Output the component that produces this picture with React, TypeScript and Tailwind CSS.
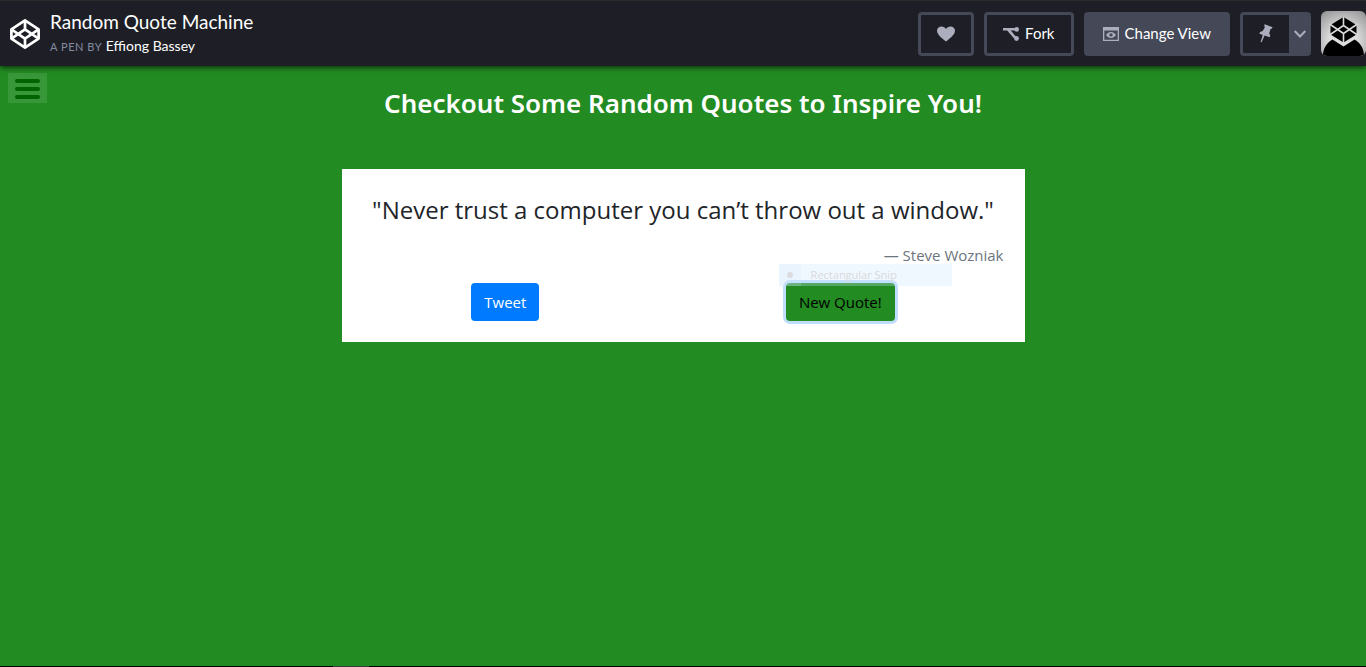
import React from "react";

function CodePenLogo() {
  return (
    <svg viewBox="0 0 30 30" className="h-[30px] w-[30px]" fill="none" stroke="#fff" strokeWidth="2.7" strokeLinejoin="round" aria-hidden="true">
      <path d="M15 1.4 28.6 10.4V19.6L15 28.6 1.4 19.6V10.4Z" />
      <path d="M15 1.4V10.4M15 19.6V28.6M1.4 10.4 15 19.6 28.6 10.4M1.4 19.6 15 10.4 28.6 19.6" />
    </svg>
  );
}

function HeartIcon() {
  return (
    <svg viewBox="0 0 18 16" className="h-4 w-[18px]" fill="#adaebd" aria-hidden="true">
      <path d="M9 15.600C5.800 12.800 0 9 0 4.800 0 2 2 .4 4.500 .4 6.500 .4 8.200 1.400 9 3 9.800 1.400 11.500 .4 13.500 .4 16 .4 18 2 18 4.800 18 9 12.200 12.800 9 15.600Z" />
    </svg>
  );
}

function ForkIcon() {
  return (
    <svg viewBox="0 0 16 14" className="h-[14px] w-4" fill="#adaebd" aria-hidden="true">
      <path d="M0 1H13V3.600H7.800L13 9.800 11.400 11.800 5.400 4.900C4.700 4.100 4 3.600 3 3.600H0Z" />
      <circle cx="13.7" cy="2.400" r="2.300" />
      <circle cx="13.5" cy="11.500" r="2.400" />
    </svg>
  );
}

function ViewIcon() {
  return (
    <svg viewBox="0 0 16 14" className="h-[14px] w-4" aria-hidden="true">
      <path fill="#adaebd" fillRule="evenodd" d="M0 0H16V14H0ZM1.300 3.500V12.700H14.700V3.500Z" />
      <path fill="#adaebd" fillRule="evenodd" d="M3 7.900C4.500 5.800 6 4.900 8 4.900S11.500 5.800 13 7.900C11.500 10 10 10.900 8 10.900S4.500 10 3 7.900ZM8 6.200A1.700 1.700 0 1 0 8 9.600 1.700 1.700 0 1 0 8 6.200Z" />
    </svg>
  );
}

function PinIcon() {
  return (
    <svg viewBox="0 0 14 19" className="h-[19px] w-[14px]" fill="#adaebd" aria-hidden="true">
      <path d="M5.600 .3 13.600 3.200 12.600 4.800 11.500 5 10.200 9.400 11.300 11.600 10.700 13.300 5.600 11.500 2.600 18.300 1.600 18 3.800 10.900 .4 9.700 1 8 3.700 6.900 6 2.900 5.200 1.900Z" />
    </svg>
  );
}

function Avatar() {
  return (
    <svg viewBox="0 0 45 45" className="block h-[45px] w-[45px] rounded-md" role="img" aria-label="Profile">
      <defs>
        <radialGradient id="avatarGlow" cx="0.5" cy="0.65" r="0.75">
          <stop offset="0.4" stopColor="#dedede" />
          <stop offset="1" stopColor="#989898" />
        </radialGradient>
      </defs>
      <rect width="45" height="45" fill="url(#avatarGlow)" />
      <path d="M2 45C2 37 6 31.500 11.500 28.500L22.500 35.500 33.500 28.500C39 31.500 43 37 43 45Z" fill="#000" />
      <path d="M22.500 6 35.500 14V23.500L22.500 31.500 9.500 23.500V14Z" fill="#000" />
      <path d="M22.500 6V14.500M22.500 22.500V32M8.500 13 22.500 22.500 36.500 13M8.500 24 22.500 14.500 36.500 24" fill="none" stroke="#dadada" strokeWidth="1.6" />
    </svg>
  );
}

function Header() {
  return (
    <header className="relative flex h-[66px] items-center justify-between border-t border-[#2b2b2b] bg-[#1e1f26] pl-[10px] font-[Lato,sans-serif] text-white shadow-[0_1px_6px_rgba(0,0,0,0.8)]">
      <div className="flex items-center gap-[10px]">
        <a href="#home" aria-label="CodePen"><CodePenLogo /></a>
        <div className="pt-0.5">
          <h1 className="text-[19px] leading-6">Random Quote Machine</h1>
          <p className="text-[14px] leading-6">
            <span className="text-[11px] tracking-wider text-[#868ca0]">A PEN BY</span>{" "}
            <a href="#author">Effiong Bassey</a>
          </p>
        </div>
      </div>
      <div className="flex items-center gap-[10px] text-[15px]">
        <button aria-label="Love" className="flex h-11 w-14 items-center justify-center rounded border-[3px] border-[#444857]"><HeartIcon /></button>
        <button className="flex h-11 items-center gap-1.5 rounded border-[3px] border-[#444857] px-4"><ForkIcon />Fork</button>
        <button className="flex h-11 items-center gap-1.5 rounded bg-[#444857] px-[19px]"><ViewIcon />Change View</button>
        <div className="flex h-11 w-[71px] overflow-hidden rounded border-[3px] border-r-0 border-[#444857]">
          <button aria-label="Pin" className="flex flex-1 items-center justify-center"><PinIcon /></button>
          <button aria-label="More pin options" className="flex w-[22px] items-center justify-center bg-[#444857]">
            <svg viewBox="0 0 12 8" className="h-2 w-3" fill="none" stroke="#adaebd" strokeWidth="2" aria-hidden="true"><path d="M.7 1 6 6.500 11.300 1" /></svg>
          </button>
        </div>
        <Avatar />
      </div>
    </header>
  );
}

function QuoteCard() {
  return (
    <section className="mx-auto mt-12 w-1/2 bg-white pt-5 pb-[21px]">
      <blockquote>
        <p className="text-center text-[24px] leading-[42px] text-[#212529]">"Never trust a computer you can’t throw out a window."</p>
        <footer className="mt-3 pr-[21px] text-right text-[15px] leading-6 text-[#6c757d]">— Steve Wozniak</footer>
      </blockquote>
      <div className="relative mt-4 flex justify-between px-[19%]">
        <a href="#tweet" className="rounded bg-[#007bff] px-[13px] py-[7px] text-[15px] leading-6 text-white">Tweet</a>
        <button className="rounded bg-[#228b22] px-[13px] py-[7px] text-[15px] leading-6 text-black ring-[3px] ring-[#bfdeff]">New Quote!</button>
        <div className="pointer-events-none absolute -top-[19px] left-[64%] flex h-[22px] w-[173px] items-center bg-[#cce8ff]/30 text-[11px] text-[#d9d9dc]">
          <span className="flex h-full w-[22px] items-center justify-center bg-[#cce8ff]/20"><span className="h-1.5 w-1.5 rounded-full bg-[#dcdce0]" /></span>
          <span className="pl-[10px]">Rectangular Snip</span>
        </div>
      </div>
    </section>
  );
}

export default function App() {
  return (
    <div className="flex min-h-screen flex-col bg-[#228b22] font-['Open_Sans','Noto_Sans',sans-serif]">
      <Header />
      <main className="relative flex-1 pt-5">
        <button aria-label="Menu" className="absolute top-[7px] left-2 flex h-[30px] w-[39px] flex-col items-center justify-center gap-1 bg-white/10 pt-0.5">
          <span className="h-1 w-[25px] rounded-full bg-[#006400]" />
          <span className="h-1 w-[25px] rounded-full bg-[#006400]" />
          <span className="h-1 w-[25px] rounded-full bg-[#006400]" />
        </button>
        <h2 className="text-center font-['Noto_Sans',sans-serif] text-[26px] leading-[35px] font-semibold text-white">Checkout Some Random Quotes to Inspire You!</h2>
        <QuoteCard />
      </main>
      <div className="h-px bg-black pl-[333px]"><div className="h-px w-9 bg-[#3c3c3c]" /></div>
    </div>
  );
}
